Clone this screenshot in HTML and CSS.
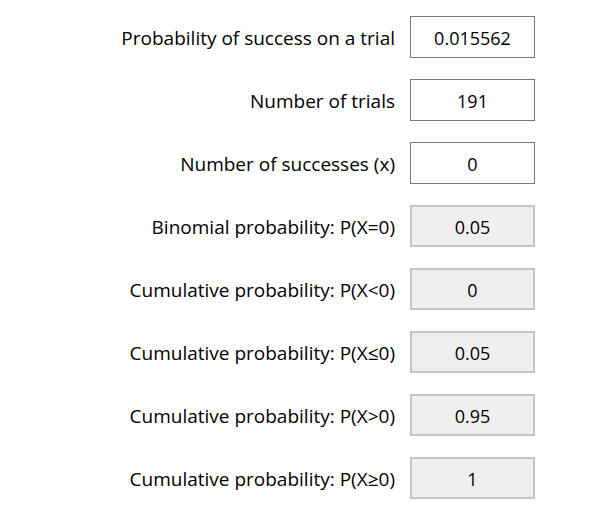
FILE: index.html
```html
<!DOCTYPE html>
<html>
<head>
<meta charset="utf-8">
<link rel="stylesheet" href="styles.css">
</head>
<body>
<div class="form">
  <div class="label">Probability of success on a trial</div>
  <div class="box edit">0.015562</div>
  <div class="label">Number of trials</div>
  <div class="box edit">191</div>
  <div class="label">Number of successes (x)</div>
  <div class="box edit">0</div>
  <div class="label">Binomial probability: P(X=0)</div>
  <div class="box ro">0.05</div>
  <div class="label">Cumulative probability: P(X&lt;0)</div>
  <div class="box ro">0</div>
  <div class="label">Cumulative probability: P(X≤0)</div>
  <div class="box ro">0.05</div>
  <div class="label">Cumulative probability: P(X&gt;0)</div>
  <div class="box ro">0.95</div>
  <div class="label">Cumulative probability: P(X≥0)</div>
  <div class="box ro">1</div>
</div>
</body>
</html>
```
FILE: styles.css
```css
html, body {
  margin: 0;
  padding: 0;
  background: #ffffff;
}
body {
  font-family: "Open Sans", "Noto Sans", sans-serif;
  font-size: 19px;
  color: #000;
}
.form {
  display: grid;
  grid-template-columns: 395px 125px;
  column-gap: 15px;
  row-gap: 21px;
  padding-top: 16px;
}
.label {
  text-align: right;
  align-self: center;
  white-space: nowrap;
  padding-top: 2px;
}
.box {
  height: 42px;
  box-sizing: border-box;
  display: flex;
  align-items: center;
  justify-content: center;
  padding-top: 2px;
  font-size: 18px;
}
.edit {
  border: 1px solid #7a7a7a;
  background: #fff;
}
.ro {
  border: 2px solid #c4c4c4;
  background: #efefef;
}
```
